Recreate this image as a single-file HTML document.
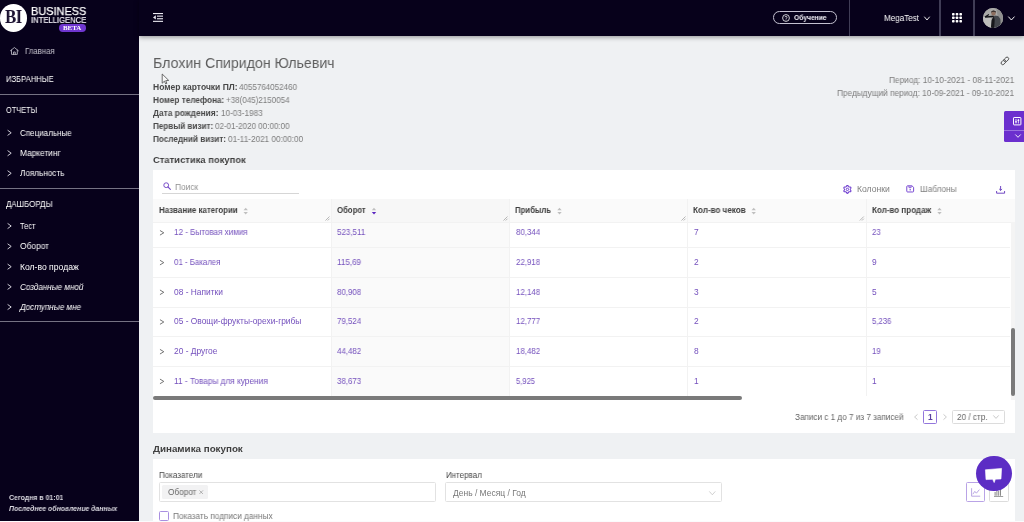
<!DOCTYPE html>
<html lang="ru">
<head>
<meta charset="utf-8">
<title>Business Intelligence</title>
<style>
*{box-sizing:border-box;margin:0;padding:0}
html,body{width:1024px;height:522px;overflow:hidden}
body{position:relative;background:#eff1f3;font-family:"Liberation Sans","DejaVu Sans",sans-serif;color:#555;font-size:8.5px}
.t{position:absolute;white-space:nowrap;line-height:14px;height:14px;transform-origin:0 50%;will-change:transform}
.t b{color:#505050}
.b{position:absolute}
#side{left:0;top:0;width:139px;height:522px;background:#07011b}
#head{left:139px;top:0;width:885px;height:36px;background:#07011b;box-shadow:0 1px 5px rgba(0,0,0,.42)}
.hr{position:absolute;left:0;width:139px;height:1px;background:#757283}
.vs{position:absolute;top:0;width:1.7px;height:36px;background:#403d56}
.card{position:absolute;left:153px;width:862px;background:#fff}
.rowl{position:absolute;left:153px;width:857px;height:1px;background:#f2f2f2}
.coll{position:absolute;top:199px;width:1px;height:197px;background:#f2f2f2}
svg{position:absolute;overflow:visible}

</style>
</head>
<body>
<div class="b" id="side"></div>
<div class="b" id="head"></div>
<!-- logo -->
<div class="b" style="left:-0.5px;top:4px;width:27.5px;height:27.5px;border-radius:50%;background:#fff"></div>
<div class="t" style="left:5.2px;top:8.4px;font-family:'Liberation Serif','DejaVu Serif',serif;font-weight:bold;font-size:18.8px;line-height:18px;height:18px;color:#1a1030;letter-spacing:-0.6px;transform:scaleX(0.89)">BI</div>
<div class="b" style="left:59px;top:24.4px;width:27.2px;height:7.4px;border-radius:3.7px;background:#6f36cf"></div>
<div class="t" style="left:63.4px;top:24.0px;font-family:'Liberation Serif','DejaVu Serif',serif;font-weight:bold;font-size:6.9px;line-height:7px;height:7px;color:#fff;letter-spacing:0px">BETA</div>
<!-- sidebar lines -->
<div class="hr" style="top:94px"></div>
<div class="hr" style="top:188px"></div>
<div class="hr" style="top:321px"></div>
<!-- home icon -->
<svg style="left:10.1px;top:47.1px" width="8.8" height="7.9" viewBox="0 0 84 76"><path d="M4 36 L42 5 L80 36 M14 30 V71 H70 V30 M34 71 V48 H50 V71" fill="none" stroke="#c4c2cc" stroke-width="8" stroke-linejoin="round" stroke-linecap="round"/></svg>
<!-- sidebar chevrons -->
<svg style="left:0;top:0" width="139" height="522" viewBox="0 0 139 522"><g fill="none" stroke="#e4e2ea" stroke-width="0.9" stroke-linecap="square" stroke-linejoin="miter">
<path d="M8 130.5 L11.2 132.8 L8 135.1"/>
<path d="M8 150.9 L11.2 153.2 L8 155.5"/>
<path d="M8 171.0 L11.2 173.3 L8 175.6"/>
<path d="M8 223.7 L11.2 226.0 L8 228.3"/>
<path d="M8 244.1 L11.2 246.4 L8 248.7"/>
<path d="M8 264.4 L11.2 266.7 L8 269.0"/>
<path d="M8 284.5 L11.2 286.8 L8 289.1"/>
<path d="M8 304.7 L11.2 307.0 L8 309.3"/>
</g></svg>
<!-- header -->
<svg style="left:153px;top:12.5px" width="10" height="9" viewBox="0 0 10 9"><g fill="#eceaf2"><rect x="0" y="0" width="10" height="1.1"/><rect x="4" y="2.6" width="6" height="1.1"/><rect x="4" y="5.2" width="6" height="1.1"/><rect x="0" y="7.8" width="10" height="1.1"/><path d="M0 4.4 L2.8 2.3 V6.5 Z"/></g></svg>
<div class="b" style="left:773px;top:11.2px;width:64px;height:12.8px;border:1px solid #c4c1d0;border-radius:6.4px"></div>
<svg style="left:782.3px;top:13.6px" width="8" height="8" viewBox="0 0 8 8"><circle cx="4" cy="4" r="3.4" fill="none" stroke="#fff" stroke-width="0.8"/><path d="M2.9 3.2 C2.9 2.1 5.1 2.1 5.1 3.2 C5.1 4 4 4 4 4.9" fill="none" stroke="#fff" stroke-width="0.7"/><rect x="3.65" y="5.5" width="0.7" height="0.7" fill="#fff"/></svg>
<div class="vs" style="left:848.8px"></div>
<div class="vs" style="left:939.1px"></div>
<div class="vs" style="left:973.1px"></div>
<svg style="left:923.7px;top:15.6px" width="6" height="5" viewBox="0 0 6 5"><path d="M0.3 0.7 L3 4 L5.7 0.7" fill="none" stroke="#fff" stroke-width="0.9"/></svg>
<svg style="left:952px;top:12.6px" width="10" height="9.4" viewBox="0 0 100 94"><g fill="#fff"><rect x="0" y="0" width="26" height="24" rx="7"/><rect x="37" y="0" width="26" height="24" rx="7"/><rect x="74" y="0" width="26" height="24" rx="7"/><rect x="0" y="35" width="26" height="24" rx="7"/><rect x="37" y="35" width="26" height="24" rx="7"/><rect x="74" y="35" width="26" height="24" rx="7"/><rect x="0" y="70" width="26" height="24" rx="7"/><rect x="37" y="70" width="26" height="24" rx="7"/><rect x="74" y="70" width="26" height="24" rx="7"/></g></svg>
<!-- avatar -->
<div class="b" style="left:983px;top:7.5px;width:20.2px;height:20.2px;border-radius:50%;overflow:hidden;background:#b0b0ae">
<svg style="left:0;top:0" width="20.2" height="20.2" viewBox="0 0 20 20"><rect width="20" height="20" fill="#a9a9a7"/><path d="M0 9 L8 9 L8 20 L0 20 Z" fill="#bebebc"/><path d="M13 0 H20 V20 H17 Z" fill="#8f8f8f"/><path d="M8.2 20 L9 11 L11.5 7.5 L15 8 L17.2 11 L17.6 20 Z" fill="#43464c"/><path d="M7.8 20 L8.6 12 L10.8 8.5 L11.6 12 L11 20 Z" fill="#17171b"/><path d="M10.8 9.2 L2.2 9.6 L1.6 8.4 L5.6 6 L6.2 6.9 L4.2 8.1 L10.6 7.4 Z" fill="#121216"/><ellipse cx="10.4" cy="5" rx="2.3" ry="2.5" fill="#8d6f60"/><path d="M8 4.6 C8 1.6 13 1.6 13 4.8 L11.6 3.6 L9.4 3.8 Z" fill="#2a2626"/></svg>
</div>
<svg style="left:1007.8px;top:16.2px" width="7" height="5" viewBox="0 0 7 5"><path d="M0.3 0.6 L3.4 4 L6.5 0.6" fill="none" stroke="#fff" stroke-width="0.95"/></svg>
<!-- link icon -->
<svg style="left:1000.4px;top:55.8px" width="9.8" height="9.8" viewBox="0 0 24 24"><g transform="rotate(-45 12 12)" fill="none" stroke="#4e4e4e" stroke-width="2.3"><rect x="0.5" y="8" width="13.5" height="8" rx="4"/><rect x="10" y="8" width="13.5" height="8" rx="4"/></g></svg>
<!-- cursor -->
<svg style="left:0;top:0" width="1024" height="522" viewBox="0 0 1024 522"><path d="M162.2 74 L162.2 83.2 L164.4 81.2 L165.7 83.9 L166.9 83.3 L165.7 80.7 L168.7 80.4 Z" fill="#f7f7f7" stroke="#4a4a4a" stroke-width="0.8" stroke-linejoin="round"/></svg>
<!-- purple side tab -->
<div class="b" style="left:1004.2px;top:111.3px;width:20px;height:30.8px;background:#6b2fce;border-radius:1.5px 0 0 1.5px"></div>
<div class="b" style="left:1004.2px;top:130.3px;width:20px;height:0.7px;background:#9a72e0"></div>
<svg style="left:1012.6px;top:116.8px" width="8.4" height="8.4" viewBox="0 0 84 84"><rect x="5" y="5" width="74" height="74" rx="6" fill="none" stroke="#fff" stroke-width="10"/><path d="M30 20 V64 M54 20 V64" stroke="#fff" stroke-width="8"/><rect x="22" y="42" width="16" height="12" fill="#fff"/><rect x="46" y="28" width="16" height="12" fill="#fff"/></svg>
<svg style="left:1014.6px;top:134.4px" width="6" height="4" viewBox="0 0 6 4"><path d="M0.3 0.5 L3 3.3 L5.7 0.5" fill="none" stroke="#fff" stroke-width="0.9"/></svg>
<!-- card 1 -->
<div class="card" style="top:170px;height:263.4px"></div>
<svg style="left:162.9px;top:182px" width="8" height="8" viewBox="0 0 80 80"><circle cx="32" cy="32" r="24" fill="none" stroke="#7a4fc9" stroke-width="10"/><path d="M50 50 L74 74" stroke="#7a4fc9" stroke-width="11" stroke-linecap="round"/></svg>
<div class="b" style="left:162.3px;top:193.4px;width:136.7px;height:1.1px;background:#d6d6d6"></div>
<!-- toolbar icons -->
<svg style="left:843.3px;top:184.8px" width="8.8" height="8.8" viewBox="0 0 24 24"><path d="M12.0 1.2 L12.9 1.4 L13.7 2.1 L14.4 3.0 L14.9 4.0 L15.4 4.7 L15.9 5.2 L16.6 5.4 L17.5 5.5 L18.6 5.4 L19.7 5.5 L20.7 5.9 L21.4 6.6 L21.6 7.5 L21.4 8.6 L21.0 9.6 L20.4 10.5 L20.0 11.3 L19.8 12.0 L20.0 12.7 L20.4 13.5 L21.0 14.4 L21.4 15.4 L21.6 16.5 L21.4 17.4 L20.7 18.1 L19.7 18.5 L18.6 18.6 L17.5 18.5 L16.6 18.6 L15.9 18.8 L15.4 19.3 L14.9 20.0 L14.4 21.0 L13.7 21.9 L12.9 22.6 L12.0 22.8 L11.1 22.6 L10.3 21.9 L9.6 21.0 L9.1 20.0 L8.6 19.3 L8.1 18.8 L7.4 18.6 L6.5 18.5 L5.4 18.6 L4.3 18.5 L3.3 18.1 L2.6 17.4 L2.4 16.5 L2.6 15.4 L3.0 14.4 L3.6 13.5 L4.0 12.7 L4.2 12.0 L4.0 11.3 L3.6 10.5 L3.0 9.6 L2.6 8.6 L2.4 7.5 L2.6 6.6 L3.3 5.9 L4.3 5.5 L5.4 5.4 L6.5 5.5 L7.4 5.4 L8.1 5.2 L8.6 4.7 L9.1 4.0 L9.6 3.0 L10.3 2.1 L11.1 1.4 Z" fill="none" stroke="#6f3ed0" stroke-width="3" stroke-linejoin="round"/><circle cx="12" cy="12" r="3.3" fill="none" stroke="#6f3ed0" stroke-width="2.6"/></svg>
<svg style="left:906.3px;top:185.2px" width="8.4" height="7.8" viewBox="0 0 24 22"><path d="M2.2 4.5 Q2.2 2.2 4.5 2.2 H17 L21.8 6.5 V17.5 Q21.8 19.8 19.5 19.8 H4.5 Q2.2 19.8 2.2 17.5 Z" fill="none" stroke="#7646d2" stroke-width="2.8" stroke-linejoin="round"/><path d="M8.5 2.5 V7.5 H14.5 V2.5" fill="none" stroke="#7646d2" stroke-width="2.4"/><circle cx="12" cy="13.5" r="2.2" fill="#7646d2"/></svg>
<svg style="left:995.7px;top:185.8px" width="9.2" height="8" viewBox="0 0 92 80"><g fill="none" stroke="#6335bd" stroke-width="9" stroke-linecap="round" stroke-linejoin="round"><path d="M46 4 V42 M35 32 L46 43 L57 32"/><path d="M6 54 V72 H86 V54"/></g></svg>
<!-- table header -->
<div class="b" style="left:153px;top:199px;width:862px;height:23px;background:#fafafa"></div>
<div class="b" style="left:331px;top:222px;width:178px;height:174px;background:#fafafa"></div>
<div class="b" style="left:331px;top:199px;width:178px;height:23px;background:#f7f7f7"></div>
<div class="rowl" style="top:222px;width:862px"></div>
<div class="rowl" style="top:247px"></div>
<div class="rowl" style="top:277px"></div>
<div class="rowl" style="top:306.5px"></div>
<div class="rowl" style="top:336px"></div>
<div class="rowl" style="top:366px"></div>
<div class="coll" style="left:331px"></div>
<div class="coll" style="left:509px"></div>
<div class="coll" style="left:687px"></div>
<div class="coll" style="left:865.5px"></div>
<!-- sorters + resize handles + row chevrons -->
<svg style="left:0;top:0" width="1024" height="522" viewBox="0 0 1024 522">
<g fill="#bfbfbf">
<path d="M243.5 210.3 L245.7 207.8 L247.9 210.3 Z"/><path d="M243.5 211.9 L245.7 214.5 L247.9 211.9 Z"/>
<path d="M371.8 210.3 L374.0 207.8 L376.2 210.3 Z"/>
<path d="M557.3 210.3 L559.5 207.8 L561.7 210.3 Z"/><path d="M557.3 211.9 L559.5 214.5 L561.7 211.9 Z"/>
<path d="M751.5 210.3 L753.7 207.8 L755.9 210.3 Z"/><path d="M751.5 211.9 L753.7 214.5 L755.9 211.9 Z"/>
<path d="M937.3 210.3 L939.5 207.8 L941.7 210.3 Z"/><path d="M937.3 211.9 L939.5 214.5 L941.7 211.9 Z"/>
</g>
<path d="M371.8 211.9 L374.0 214.5 L376.2 211.9 Z" fill="#5a25c0"/>
<g stroke="#8a8a8a" stroke-width="0.6" fill="none">
<path d="M325.5 220.5 L329.5 216.5 M327.7 220.5 L329.5 218.7"/>
<path d="M503.5 220.5 L507.5 216.5 M505.7 220.5 L507.5 218.7"/>
<path d="M681.5 220.5 L685.5 216.5 M683.7 220.5 L685.5 218.7"/>
<path d="M859.8 220.5 L863.8 216.5 M862 220.5 L863.8 218.7"/>
</g>
<g stroke="#666" stroke-width="0.9" fill="none" stroke-linecap="round" stroke-linejoin="round">
<path d="M160.3 230.7 L163.8 232.8 L160.3 234.9"/>
<path d="M160.3 260.5 L163.8 262.6 L160.3 264.7"/>
<path d="M160.3 290.2 L163.8 292.3 L160.3 294.4"/>
<path d="M160.3 319.9 L163.8 322.0 L160.3 324.1"/>
<path d="M160.3 349.6 L163.8 351.7 L160.3 353.8"/>
<path d="M160.3 379.3 L163.8 381.4 L160.3 383.5"/>
</g>
</svg>
<!-- scrollbars -->
<div class="b" style="left:1010.5px;top:222px;width:4.5px;height:178px;background:#f4f4f4"></div>
<div class="b" style="left:1010.6px;top:328px;width:4px;height:67.5px;background:#7a7a7a;border-radius:2px"></div>
<div class="b" style="left:153px;top:395.8px;width:589px;height:3.8px;background:#7a7a7a;border-radius:2px"></div>
<!-- pagination -->
<svg style="left:913.8px;top:414px" width="4" height="6" viewBox="0 0 4 6"><path d="M3.5 0.4 L0.6 3 L3.5 5.6" fill="none" stroke="#bdbdbd" stroke-width="0.8"/></svg>
<div class="b" style="left:923px;top:410px;width:14px;height:14px;border:1px solid #9376dc;border-radius:1.5px;background:#fff"></div>
<svg style="left:943px;top:414px" width="4" height="6" viewBox="0 0 4 6"><path d="M0.5 0.4 L3.4 3 L0.5 5.6" fill="none" stroke="#bdbdbd" stroke-width="0.8"/></svg>
<div class="b" style="left:952px;top:410px;width:53px;height:14px;border:1px solid #dcdcdc;border-radius:1.5px;background:#fff"></div>
<svg style="left:992.5px;top:415px" width="6" height="4" viewBox="0 0 6 4"><path d="M0.3 0.4 L3 3.4 L5.7 0.4" fill="none" stroke="#bdbdbd" stroke-width="0.8"/></svg>
<!-- card 2 -->
<div class="card" style="top:458.7px;height:63.3px"></div>
<div class="b" style="left:158.8px;top:482.2px;width:277.2px;height:19.4px;border:1px solid #e2e2e2;border-radius:1.5px;background:#fff"></div>
<div class="b" style="left:162.3px;top:485.2px;width:45.6px;height:13.6px;background:#f2f2f3;border-radius:1.5px"></div>
<svg style="left:199.3px;top:490px" width="4.4" height="4.4" viewBox="0 0 44 44"><path d="M4 4 L40 40 M40 4 L4 40" stroke="#888" stroke-width="6"/></svg>
<div class="b" style="left:445.2px;top:482.2px;width:277.2px;height:19.4px;border:1px solid #e2e2e2;border-radius:1.5px;background:#fff"></div>
<svg style="left:709px;top:490.6px" width="6.6" height="4.4" viewBox="0 0 66 44"><path d="M3 4 L33 38 L63 4" fill="none" stroke="#c4c4c4" stroke-width="8"/></svg>
<div class="b" style="left:159px;top:511.3px;width:9.6px;height:9.6px;border:1px solid #a98fe0;border-radius:1.5px;background:#fff"></div>
<!-- chart type buttons -->
<div class="b" style="left:965.6px;top:482px;width:19.6px;height:19.6px;border:1px solid #b9a3e6;border-radius:1.5px;background:#fff"></div>
<svg style="left:970.6px;top:488px" width="9.6" height="9" viewBox="0 0 96 90"><g fill="none" stroke="#a890dc" stroke-width="8" stroke-linejoin="round"><path d="M6 2 V82 H92"/><path d="M18 62 L38 34 L54 52 L84 16"/></g></svg>
<div class="b" style="left:989px;top:482px;width:19.6px;height:19.6px;border:1px solid #dcdcdc;border-radius:1.5px;background:#fff"></div>
<svg style="left:994.2px;top:488px" width="9.2" height="9" viewBox="0 0 92 90"><g fill="#8a8a8a"><rect x="6" y="40" width="10" height="38"/><rect x="24" y="14" width="10" height="64"/><rect x="42" y="30" width="10" height="48"/><rect x="60" y="6" width="10" height="72"/><rect x="0" y="82" width="92" height="8"/></g></svg>
<!-- chat bubble -->
<div class="b" style="left:976px;top:455.7px;width:35.6px;height:35.6px;border-radius:50%;background:#5c2dc4"></div>
<svg style="left:985px;top:467.5px" width="17.2" height="15" viewBox="0 0 172 150"><path d="M4 18 L166 4 L160 110 L104 112 L92 146 L76 113 L10 116 Z" fill="#fff" stroke="#fff" stroke-width="6" stroke-linejoin="round"/></svg>
<!-- bottom white strip -->
<div class="b" style="left:0;top:521px;width:1024px;height:1px;background:#fbfbfc"></div>

<div class="t" id="t0" style="left:31.00px;top:4.27px;font-size:11.50px;color:#fff;-webkit-text-stroke:0.25px #fff;transform:scaleX(0.9506)">BUSINESS</div>
<div class="t" id="t1" style="left:31.00px;top:13.14px;font-size:8.50px;color:#efedf4;-webkit-text-stroke:0.2px #efedf4;transform:scaleX(0.9006)">INTELLIGENCE</div>
<div class="t" id="t2" style="left:25.00px;top:44.11px;font-size:8.40px;color:#c4c2cc;transform:scaleX(0.9313)">Главная</div>
<div class="t" id="t3" style="left:6.00px;top:71.88px;font-size:8.60px;color:#fff;transform:scaleX(0.8871)">ИЗБРАННЫЕ</div>
<div class="t" id="t4" style="left:6.00px;top:102.97px;font-size:8.60px;color:#fff;transform:scaleX(0.8548)">ОТЧЕТЫ</div>
<div class="t" id="t5" style="left:20.00px;top:125.77px;font-size:8.60px;color:#fff;transform:scaleX(0.9342)">Специальные</div>
<div class="t" id="t6" style="left:20.00px;top:146.18px;font-size:8.60px;color:#fff;transform:scaleX(0.9693)">Маркетинг</div>
<div class="t" id="t7" style="left:20.00px;top:166.27px;font-size:8.60px;color:#fff;transform:scaleX(0.9485)">Лояльность</div>
<div class="t" id="t8" style="left:5.70px;top:196.57px;font-size:8.60px;color:#fff;transform:scaleX(0.9254)">ДАШБОРДЫ</div>
<div class="t" id="t9" style="left:20.00px;top:218.97px;font-size:8.60px;color:#fff;transform:scaleX(0.8717)">Тест</div>
<div class="t" id="t10" style="left:20.00px;top:239.38px;font-size:8.60px;color:#fff;transform:scaleX(0.9763)">Оборот</div>
<div class="t" id="t11" style="left:20.00px;top:259.68px;font-size:8.60px;color:#fff">Кол-во продаж</div>
<div class="t" id="t12" style="left:20.00px;top:279.77px;font-size:8.60px;color:#fff;font-style:italic;transform:scaleX(0.9384)">Созданные мной</div>
<div class="t" id="t13" style="left:20.00px;top:299.97px;font-size:8.60px;color:#fff;font-style:italic;transform:scaleX(0.9421)">Доступные мне</div>
<div class="t" id="t14" style="left:9.30px;top:490.86px;font-size:7.40px;color:#dcdbe2;font-weight:bold;transform:scaleX(0.9382)">Сегодня в 01:01</div>
<div class="t" id="t15" style="left:9.30px;top:501.98px;font-size:7.20px;color:#dcdbe2;font-weight:bold;font-style:italic;transform:scaleX(0.9577)">Последнее обновление данных</div>
<div class="t" id="t16" style="left:794.40px;top:11.23px;font-size:7.60px;color:#f0eef5;font-weight:bold;transform:scaleX(0.8848)">Обучение</div>
<div class="t" id="t17" style="left:883.80px;top:10.82px;font-size:9.00px;color:#fff;transform:scaleX(0.8967)">MegaTest</div>
<div class="t" id="t18" style="left:153.00px;top:56.15px;font-size:15.50px;color:#5e5e5e;transform:scaleX(0.9141)">Блохин Спиридон Юльевич</div>
<div class="t" id="t19" style="left:153.00px;top:79.93px;font-size:8.50px;color:#484848;font-weight:bold">Номер карточки ПЛ:</div>
<div class="t" id="t20" style="left:239.00px;top:79.93px;font-size:8.50px;color:#7c7c7c;transform:scaleX(0.9436)">4055764052460</div>
<div class="t" id="t21" style="left:153.00px;top:92.84px;font-size:8.50px;color:#484848;font-weight:bold;transform:scaleX(0.9634)">Номер телефона:</div>
<div class="t" id="t22" style="left:226.20px;top:92.84px;font-size:8.50px;color:#7c7c7c;transform:scaleX(0.9427)">+38(045)2150054</div>
<div class="t" id="t23" style="left:153.00px;top:105.84px;font-size:8.50px;color:#484848;font-weight:bold;transform:scaleX(0.9833)">Дата рождения:</div>
<div class="t" id="t24" style="left:220.50px;top:105.84px;font-size:8.50px;color:#7c7c7c;transform:scaleX(0.9590)">10-03-1983</div>
<div class="t" id="t25" style="left:153.00px;top:118.84px;font-size:8.50px;color:#484848;font-weight:bold;transform:scaleX(0.9556)">Первый визит:</div>
<div class="t" id="t26" style="left:215.20px;top:118.84px;font-size:8.50px;color:#7c7c7c;transform:scaleX(0.9438)">02-01-2020 00:00:00</div>
<div class="t" id="t27" style="left:153.00px;top:131.74px;font-size:8.50px;color:#484848;font-weight:bold;transform:scaleX(0.9584)">Последний визит:</div>
<div class="t" id="t28" style="left:227.60px;top:131.74px;font-size:8.50px;color:#7c7c7c;transform:scaleX(0.9603)">01-11-2021 00:00:00</div>
<div class="t" id="t29" style="left:888.50px;top:73.25px;font-size:8.80px;color:#7c7c7c;transform:scaleX(0.9428)">Период: 10-10-2021 - 08-11-2021</div>
<div class="t" id="t30" style="left:836.70px;top:86.04px;font-size:8.80px;color:#7c7c7c;transform:scaleX(0.9399)">Предыдущий период: 10-09-2021 - 09-10-2021</div>
<div class="t" id="t31" style="left:153.00px;top:153.29px;font-size:9.80px;color:#3f3f3f;font-weight:bold;transform:scaleX(0.9602)">Статистика покупок</div>
<div class="t" id="t32" style="left:174.60px;top:179.82px;font-size:9.00px;color:#909090;transform:scaleX(0.9257)">Поиск</div>
<div class="t" id="t33" style="left:856.50px;top:182.38px;font-size:8.60px;color:#808080;transform:scaleX(0.9909)">Колонки</div>
<div class="t" id="t34" style="left:919.60px;top:182.38px;font-size:8.60px;color:#808080;transform:scaleX(0.9654)">Шаблоны</div>
<div class="t" id="t35" style="left:158.90px;top:202.97px;font-size:8.30px;color:#3d3d3d;font-weight:bold;transform:scaleX(0.9527)">Название категории</div>
<div class="t" id="t36" style="left:337.00px;top:202.97px;font-size:8.30px;color:#3d3d3d;font-weight:bold;transform:scaleX(0.9367)">Оборот</div>
<div class="t" id="t37" style="left:515.00px;top:202.97px;font-size:8.30px;color:#3d3d3d;font-weight:bold;transform:scaleX(0.9324)">Прибыль</div>
<div class="t" id="t38" style="left:693.00px;top:202.97px;font-size:8.30px;color:#3d3d3d;font-weight:bold;transform:scaleX(0.9765)">Кол-во чеков</div>
<div class="t" id="t39" style="left:871.80px;top:202.97px;font-size:8.30px;color:#3d3d3d;font-weight:bold;transform:scaleX(0.9685)">Кол-во продаж</div>
<div class="t" id="t40" style="left:173.60px;top:225.20px;font-size:8.40px;color:#7450bd;transform:scaleX(0.9635)">12 - Бытовая химия</div>
<div class="t" id="t41" style="left:337.30px;top:225.20px;font-size:8.40px;color:#7450bd;transform:scaleX(0.9509)">523,511</div>
<div class="t" id="t42" style="left:515.50px;top:225.20px;font-size:8.40px;color:#7450bd;transform:scaleX(0.9405)">80,344</div>
<div class="t" id="t43" style="left:694.00px;top:225.20px;font-size:8.40px;color:#7450bd;transform:scaleX(0.9000)">7</div>
<div class="t" id="t44" style="left:872.20px;top:225.20px;font-size:8.40px;color:#7450bd;transform:scaleX(0.9219)">23</div>
<div class="t" id="t45" style="left:173.60px;top:255.00px;font-size:8.40px;color:#7450bd;transform:scaleX(0.9374)">01 - Бакалея</div>
<div class="t" id="t46" style="left:337.30px;top:255.00px;font-size:8.40px;color:#7450bd;transform:scaleX(0.9640)">115,69</div>
<div class="t" id="t47" style="left:515.50px;top:255.00px;font-size:8.40px;color:#7450bd;transform:scaleX(0.9405)">22,918</div>
<div class="t" id="t48" style="left:694.00px;top:255.00px;font-size:8.40px;color:#7450bd;transform:scaleX(0.9000)">2</div>
<div class="t" id="t49" style="left:872.20px;top:255.00px;font-size:8.40px;color:#7450bd;transform:scaleX(0.9000)">9</div>
<div class="t" id="t50" style="left:173.60px;top:284.70px;font-size:8.40px;color:#7450bd;transform:scaleX(0.9906)">08 - Напитки</div>
<div class="t" id="t51" style="left:337.30px;top:284.70px;font-size:8.40px;color:#7450bd;transform:scaleX(0.9405)">80,908</div>
<div class="t" id="t52" style="left:515.50px;top:284.70px;font-size:8.40px;color:#7450bd;transform:scaleX(0.9405)">12,148</div>
<div class="t" id="t53" style="left:694.00px;top:284.70px;font-size:8.40px;color:#7450bd;transform:scaleX(0.9000)">3</div>
<div class="t" id="t54" style="left:872.20px;top:284.70px;font-size:8.40px;color:#7450bd;transform:scaleX(0.9000)">5</div>
<div class="t" id="t55" style="left:173.60px;top:314.40px;font-size:8.40px;color:#7450bd">05 - Овощи-фрукты-орехи-грибы</div>
<div class="t" id="t56" style="left:337.30px;top:314.40px;font-size:8.40px;color:#7450bd;transform:scaleX(0.9405)">79,524</div>
<div class="t" id="t57" style="left:515.50px;top:314.40px;font-size:8.40px;color:#7450bd;transform:scaleX(0.9405)">12,777</div>
<div class="t" id="t58" style="left:694.00px;top:314.40px;font-size:8.40px;color:#7450bd;transform:scaleX(0.9000)">2</div>
<div class="t" id="t59" style="left:872.20px;top:314.40px;font-size:8.40px;color:#7450bd;transform:scaleX(0.9204)">5,236</div>
<div class="t" id="t60" style="left:173.60px;top:344.11px;font-size:8.40px;color:#7450bd">20 - Другое</div>
<div class="t" id="t61" style="left:337.30px;top:344.11px;font-size:8.40px;color:#7450bd;transform:scaleX(0.9405)">44,482</div>
<div class="t" id="t62" style="left:515.50px;top:344.11px;font-size:8.40px;color:#7450bd;transform:scaleX(0.9405)">18,482</div>
<div class="t" id="t63" style="left:694.00px;top:344.11px;font-size:8.40px;color:#7450bd;transform:scaleX(0.9000)">8</div>
<div class="t" id="t64" style="left:872.20px;top:344.11px;font-size:8.40px;color:#7450bd;transform:scaleX(0.9219)">19</div>
<div class="t" id="t65" style="left:173.60px;top:373.81px;font-size:8.40px;color:#7450bd;transform:scaleX(0.9861)">11 - Товары для курения</div>
<div class="t" id="t66" style="left:337.30px;top:373.81px;font-size:8.40px;color:#7450bd;transform:scaleX(0.9405)">38,673</div>
<div class="t" id="t67" style="left:515.50px;top:373.81px;font-size:8.40px;color:#7450bd;transform:scaleX(0.9061)">5,925</div>
<div class="t" id="t68" style="left:694.00px;top:373.81px;font-size:8.40px;color:#7450bd;transform:scaleX(0.9000)">1</div>
<div class="t" id="t69" style="left:872.20px;top:373.81px;font-size:8.40px;color:#7450bd;transform:scaleX(0.9000)">1</div>
<div class="t" id="t70" style="left:795.00px;top:409.93px;font-size:8.50px;color:#666;transform:scaleX(0.9583)">Записи с 1 до 7 из 7 записей</div>
<div class="t" id="t71" style="left:928.00px;top:410.20px;font-size:8.40px;color:#5a42a0;font-weight:bold;transform:scaleX(0.9000)">1</div>
<div class="t" id="t72" style="left:957.20px;top:409.93px;font-size:8.50px;color:#666;transform:scaleX(0.9628)">20 / стр.</div>
<div class="t" id="t73" style="left:153.00px;top:442.09px;font-size:9.80px;color:#3f3f3f;font-weight:bold">Динамика покупок</div>
<div class="t" id="t74" style="left:159.40px;top:467.93px;font-size:8.50px;color:#484848;transform:scaleX(0.9461)">Показатели</div>
<div class="t" id="t75" style="left:445.70px;top:467.93px;font-size:8.50px;color:#484848;transform:scaleX(0.9379)">Интервал</div>
<div class="t" id="t76" style="left:167.60px;top:485.20px;font-size:8.40px;color:#666;transform:scaleX(0.9814)">Оборот</div>
<div class="t" id="t77" style="left:452.70px;top:486.00px;font-size:8.40px;color:#777;transform:scaleX(1.0115)">День / Месяц / Год</div>
<div class="t" id="t78" style="left:173.40px;top:508.93px;font-size:8.50px;color:#777;transform:scaleX(0.9693)">Показать подписи данных</div>
</body>
</html>
